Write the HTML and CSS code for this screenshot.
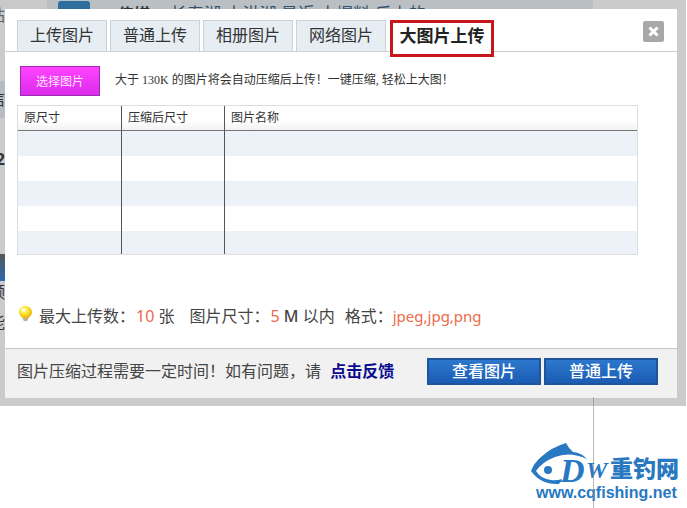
FILE: index.html
```html
<!DOCTYPE html>
<html lang="zh-CN">
<head>
<meta charset="utf-8">
<title>大图片上传</title>
<link rel="stylesheet" href="styles.css">
</head>
<body>
<div class="overlay">
  <div class="backdrop" aria-hidden="true">
    <div class="strip-top">
      <span class="strip-corner"></span>
      <div class="strip-nav">
        <span class="nav-icon"></span>
        <b>传媒</b>
        <span class="nav-links">长寿湖 大洪湖 最近 大爆料 乐上的</span>
      </div>
    </div>
    <div class="strip-left">
      <span class="side side-a">站</span>
      <span class="side side-b">信</span>
      <span class="side side-c">2</span>
      <span class="side side-d"></span>
      <span class="side side-e">频</span>
      <span class="side side-f">能</span>
    </div>
  </div>
  <main class="dialog">
    <header class="tabbar">
      <nav class="tabs">
        <button class="tab">上传图片</button>
        <button class="tab">普通上传</button>
        <button class="tab">相册图片</button>
        <button class="tab">网络图片</button>
        <button class="tab active">大图片上传</button>
      </nav>
      <button class="close" aria-label="关闭">
        <svg width="21" height="21" viewBox="0 0 21 21"><path d="M6.500 6.500l8 8M14.500 6.500l-8 8" stroke="#fff" stroke-width="3"/></svg>
      </button>
    </header>
    <section class="content">
      <div class="picker">
        <button class="choose">选择图片</button>
        <p class="hint">大于 130K 的图片将会自动压缩后上传！一键压缩, 轻松上大图！</p>
      </div>
      <table class="files">
        <thead><tr><th class="first">原尺寸</th><th class="second">压缩后尺寸</th><th>图片名称</th></tr></thead>
        <tbody>
          <tr><td></td><td></td><td></td></tr>
          <tr><td></td><td></td><td></td></tr>
          <tr><td></td><td></td><td></td></tr>
          <tr><td></td><td></td><td></td></tr>
          <tr><td></td><td></td><td></td></tr>
        </tbody>
      </table>
      <div class="limits">
        <svg class="bulb" width="15" height="16" viewBox="0 0 15 16">
          <defs><radialGradient id="glow" cx=".4" cy=".35" r=".65"><stop offset="0" stop-color="#fffbb0"/><stop offset=".5" stop-color="#fbe52e"/><stop offset="1" stop-color="#eab010"/></radialGradient></defs>
          <path d="M7.500 0a6.500 6.200 0 0 1 6.500 6.200c0 2.800-2 4-3.500 5.800h-6C3 10.200 1 9 1 6.200A6.500 6.200 0 0 1 7.500 0z" fill="url(#glow)"/>
          <path d="M5 12h5v1.500l-1 1.500H6l-1-1.500z" fill="#b9b08c"/>
          <ellipse cx="5.500" cy="4" rx="2.200" ry="1.600" fill="#fff" opacity=".8"/>
        </svg>
        <span class="count">最大上传数：<em>10</em> 张</span>
        <span>图片尺寸：<em>5</em> <b>M</b> 以内</span>
        <span>格式：<em class="formats">jpeg,jpg,png</em></span>
      </div>
    </section>
    <footer class="actions">
      <p>图片压缩过程需要一定时间！如有问题，请 <a href="#feedback">点击反馈</a></p>
      <div class="buttons">
        <button class="primary">查看图片</button>
        <button class="primary">普通上传</button>
      </div>
    </footer>
  </main>
</div>
<div class="below">
  <div class="logo">
    <div class="brand">
      <svg width="80" height="42" viewBox="0 0 80 42">
        <g fill="#2878c2">
          <path d="M11 14Q22 4 36 0Q39 6 43 9Q52 10 57 16Q40 8 25 14Q12 19 6 28Q11 36 21 37Q26 38 32 36L29 41Q11 42 1 28Q4 20 11 14z"/>
          <circle cx="18" cy="27" r="4"/>
        </g>
        <text class="mark" x="30" y="39">D</text>
        <text class="mark mark-w" x="56" y="35">W</text>
      </svg>
      <span>重钓网</span>
    </div>
    <div class="domain">www.cqfishing.net</div>
  </div>
  <span class="rule"></span>
</div>
</body>
</html>
```
FILE: styles.css
```css
* { box-sizing: border-box; }
body {
  margin: 0;
  background: #fff;
  color: #444;
  font: 16px/20px "Noto Sans", "Noto Sans CJK SC", sans-serif;
}
button { font: inherit; padding: 0; margin: 0; border: 0; }
p { margin: 0; }
.overlay {
  position: relative;
  margin-right: 1px;
  padding: 9px 9px 8px 5px;
  background: #cbcbcb;
}
.backdrop { position: absolute; inset: 0; overflow: hidden; }
.strip-top { display: flex; height: 9px; overflow: hidden; }
.strip-corner { width: 47px; background: #c9c9c9; }
.strip-nav {
  display: flex;
  width: 546px;
  padding-left: 11px;
  background: #b9bfc3;
  color: #35506c;
  line-height: 28px;
}
.strip-nav b { margin: 0 20px 0 28px; color: #333; }
.nav-links { font-size: 17px; }
.nav-icon { width: 32px; height: 12px; margin-top: 1px; border-radius: 3px; background: #2e6e9e; }
.strip-left {
  position: absolute;
  top: 0;
  left: 0;
  width: 5px;
  height: 100%;
  overflow: hidden;
}
.side { position: absolute; right: 0; color: #333; }
.side-a { top: 5px; color: #666; }
.side-b { top: 81px; height: 37px; line-height: 37px; background: #b6bcc2; }
.side-c { top: 149px; font-weight: 700; }
.side-d { top: 254px; width: 5px; height: 27px; background: linear-gradient(#555, #2d6ab0); }
.side-e { top: 282px; }
.side-f { top: 312px; }

.dialog { position: relative; background: #fff; }
.tabbar {
  display: flex;
  justify-content: space-between;
  align-items: flex-start;
  height: 43px;
  padding: 11px 13px 0 12px;
  border-bottom: 1px solid #ccc;
}
.tabs { display: flex; gap: 3px; }
.tab {
  width: 90px;
  height: 32px;
  padding-bottom: 2px;
  border: 1px solid #ccd3d8;
  background: #e6edf3;
  color: #333;
  white-space: nowrap;
}
.tab.active {
  width: 104px;
  height: 37px;
  margin-left: 1px;
  padding-bottom: 6px;
  border: 3px solid #c8161d;
  background: #fff;
  color: #222;
  font-size: 17px;
  font-weight: 700;
}
.close {
  width: 21px;
  height: 21px;
  margin-top: 1px;
  border-radius: 2px;
  background: #a8a8a8;
}
.close svg { display: block; }
.content { padding: 14px 39px 21px 12px; }
.picker { display: flex; gap: 15px; padding-left: 3px; }
.choose {
  width: 80px;
  height: 30px;
  padding-top: 2px;
  border: 1px solid #9a2bb0;
  background: linear-gradient(#ff43ff, #dc2cec);
  color: #ffe4ff;
  font-size: 12px;
}
.hint {
  padding-top: 4px;
  font-family: "Liberation Serif", "Noto Sans CJK SC", serif;
  font-size: 12px;
  color: #333;
}
.files {
  width: 100%;
  margin-top: 9px;
  border: 1px solid #ddd;
  border-spacing: 0;
  table-layout: fixed;
  font-size: 12px;
}
.files th {
  height: 25px;
  padding: 0 6px;
  border-bottom: 1px solid #777;
  background: linear-gradient(#fff 60%, #f1f2f4);
  color: #333;
  font-weight: 400;
  text-align: left;
}
.files .first { width: 104px; }
.files .second { width: 103px; }
.files td { height: 25px; padding: 0; }
.files tr:last-child td { height: 23px; }
.files tr > :not(:last-child) { border-right: 1px solid #555; }
.files tbody tr:nth-child(odd) { background: #edf2f9; }
.limits { display: flex; gap: 10px; margin-top: 51px; padding-bottom: 1px; }
.bulb { margin: 0 -4px 0 1px; }
.count { margin-right: 5px; }
.limits em { margin-left: 1px; color: #ec6a4c; font-style: normal; }
.limits .formats { margin-left: 0; font-size: 15px; }
.limits b { font-weight: 500; }
.actions {
  display: flex;
  justify-content: space-between;
  align-items: center;
  height: 50px;
  padding: 0 19px 4px 12px;
  border-top: 1px solid #c4c4c4;
  background: #f1f1f1;
  white-space: nowrap;
}
.actions p { padding-bottom: 2px; }
.actions a { margin-left: 5px; color: #0b0b90; font-weight: 700; text-decoration: none; }
.buttons { display: flex; gap: 3px; }
.primary {
  width: 114px;
  height: 27px;
  padding-bottom: 2px;
  border: 2px solid #1c559c;
  background: linear-gradient(#2c78cc, #1b5cb4);
  color: #fff;
  font-weight: 500;
}
.below {
  position: relative;
  display: flex;
  justify-content: flex-end;
  padding: 37px 8px 0 0;
  height: 102px;
}
.rule {
  position: absolute;
  top: -9px;
  bottom: 0;
  right: 93px;
  width: 1px;
  background: #888;
  opacity: .6;
}
.logo { color: #2878c2; }
.brand {
  display: flex;
  align-items: center;
  font-size: 23px;
  font-weight: 900;
}
.brand span { padding-top: 8px; }
.mark { font: italic 700 34px "Liberation Serif", serif; fill: #2878c2; }
.mark-w { font-size: 24px; }
.domain { padding-left: 6px; font: 700 16px/16px "Liberation Sans", sans-serif; }
```
